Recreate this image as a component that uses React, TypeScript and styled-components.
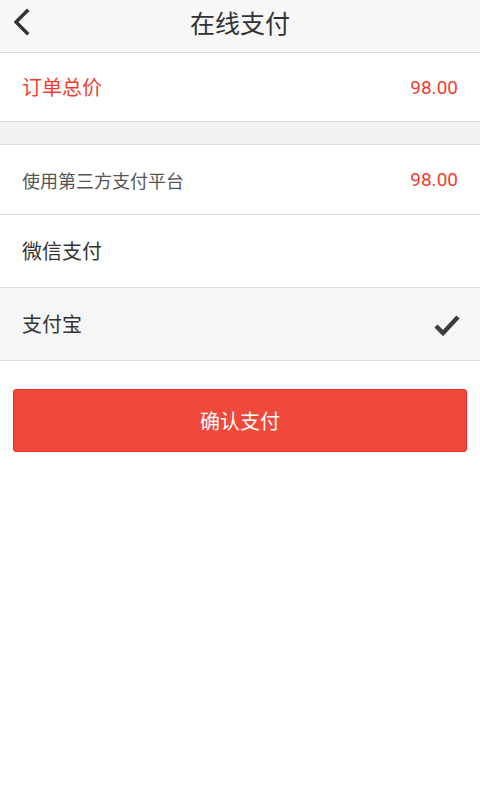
import React, { useState } from "react";
import styled, { createGlobalStyle } from "styled-components";

const GlobalStyle = createGlobalStyle`
  html, body {
    margin: 0;
    padding: 0;
    background: #ffffff;
  }
  body {
    font-family: "Noto Sans CJK SC", "Noto Sans", Roboto, sans-serif;
  }
  * {
    box-sizing: border-box;
  }
`;

const Page = styled.div`
  width: 480px;
  min-height: 800px;
  background: #ffffff;
  display: flex;
  flex-direction: column;
`;

const Header = styled.header`
  height: 53px;
  padding-bottom: 8px;
  background: #f7f7f7;
  border-bottom: 1px solid #dadada;
  display: grid;
  grid-template-columns: 60px 1fr 60px;
  align-items: center;
`;

const BackButton = styled.button`
  border: none;
  background: transparent;
  padding: 0 0 0 12px;
  display: flex;
  align-items: center;
  cursor: pointer;
`;

const Title = styled.h1`
  margin: 0;
  text-align: center;
  font-size: 25px;
  font-weight: 400;
  color: #333333;
  line-height: 1;
`;

const Row = styled.div<{ $height: number; $selected?: boolean }>`
  height: ${(p) => p.$height}px;
  padding: 0 22px;
  display: flex;
  align-items: center;
  justify-content: space-between;
  background: ${(p) => (p.$selected ? "#f6f6f6" : "#ffffff")};
  border-bottom: 1px solid #dcdcdc;
  cursor: pointer;
`;

const Label = styled.span<{ $size: number; $color: string }>`
  font-size: ${(p) => p.$size}px;
  color: ${(p) => p.$color};
  line-height: 1;
`;

const Price = styled.span`
  font-family: Roboto, "Noto Sans", sans-serif;
  font-size: 19px;
  color: #f23c2f;
  line-height: 1;
`;

const Spacer = styled.div`
  height: 23px;
  background: #f2f2f2;
  border-bottom: 1px solid #dcdcdc;
`;

const CheckWrap = styled.span`
  display: flex;
  margin-right: -3px;
`;

const ConfirmButton = styled.button`
  margin: 28px 13px 0;
  height: 63px;
  border: 1px solid #e8322a;
  border-radius: 3px;
  background: #f0483a;
  color: #ffffff;
  font-family: "Noto Sans CJK SC", sans-serif;
  font-size: 20px;
  cursor: pointer;
`;

const ChevronLeft = () => (
  <svg width="20" height="28" viewBox="0 0 20 28">
    <path d="M15 3 L4 14 L15 25" fill="none" stroke="#333" strokeWidth="3.4" strokeLinecap="square" />
  </svg>
);

const CheckMark = () => (
  <svg width="28" height="26" viewBox="0 0 28 26">
    <path d="M3 15 L10 22 L25 6" fill="none" stroke="#3c3c3c" strokeWidth="4.4" strokeLinejoin="miter" />
  </svg>
);

const methods = ["微信支付", "支付宝"];

export default function App() {
  const [method, setMethod] = useState("支付宝");

  return (
    <Page>
      <GlobalStyle />
      <Header>
        <BackButton aria-label="返回">
          <ChevronLeft />
        </BackButton>
        <Title>在线支付</Title>
        <div />
      </Header>

      <Row $height={69}>
        <Label $size={20} $color="#f23c2f">订单总价</Label>
        <Price>98.00</Price>
      </Row>

      <Spacer />

      <Row $height={70}>
        <Label $size={18} $color="#555555">使用第三方支付平台</Label>
        <Price>98.00</Price>
      </Row>

      {methods.map((m) => (
        <Row key={m} $height={73} $selected={method === m} onClick={() => setMethod(m)}>
          <Label $size={20} $color="#333333">{m}</Label>
          {method === m && (
            <CheckWrap>
              <CheckMark />
            </CheckWrap>
          )}
        </Row>
      ))}

      <ConfirmButton>确认支付</ConfirmButton>
    </Page>
  );
}
